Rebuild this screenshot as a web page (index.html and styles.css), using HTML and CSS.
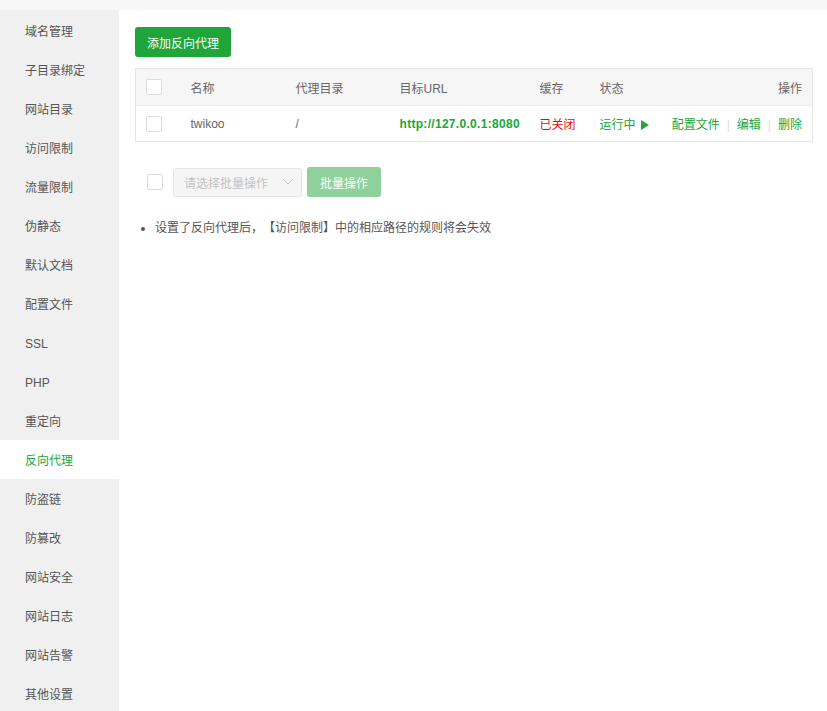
FILE: index.html
```html
<!DOCTYPE html>
<html lang="zh-CN">
<head>
    <meta charset="UTF-8">
    <meta name="viewport" content="width=device-width, initial-scale=1.0">
    <title>反向代理</title>
    <link rel="stylesheet" href="styles.css">
</head>
<body>
    <div class="top-strip"></div>
    <div class="layout">
        <ul class="side-menu">
            <li>域名管理</li>
            <li>子目录绑定</li>
            <li>网站目录</li>
            <li>访问限制</li>
            <li>流量限制</li>
            <li>伪静态</li>
            <li>默认文档</li>
            <li>配置文件</li>
            <li>SSL</li>
            <li>PHP</li>
            <li>重定向</li>
            <li class="active">反向代理</li>
            <li>防盗链</li>
            <li>防篡改</li>
            <li>网站安全</li>
            <li>网站日志</li>
            <li>网站告警</li>
            <li>其他设置</li>
        </ul>
        <main class="content">
            <button class="btn-green">添加反向代理</button>
            <table class="proxy-table">
                <colgroup>
                    <col style="width: 45px">
                    <col style="width: 105px">
                    <col style="width: 104px">
                    <col style="width: 140px">
                    <col style="width: 60px">
                    <col style="width: 70px">
                    <col>
                </colgroup>
                <thead>
                    <tr>
                        <th><span class="checkbox"></span></th>
                        <th>名称</th>
                        <th>代理目录</th>
                        <th>目标URL</th>
                        <th>缓存</th>
                        <th>状态</th>
                        <th class="right">操作</th>
                    </tr>
                </thead>
                <tbody>
                    <tr>
                        <td><span class="checkbox"></span></td>
                        <td>twikoo</td>
                        <td>/</td>
                        <td class="url">http://127.0.0.1:8080</td>
                        <td class="off">已关闭</td>
                        <td class="running">运行中<svg class="play" width="8" height="10" viewBox="0 0 8 10"><path d="M0 0 L8 5 L0 10 Z" fill="#20a53a"/></svg></td>
                        <td class="right actions">
                            <a href="#">配置文件</a><span class="sep">|</span><a href="#">编辑</a><span class="sep">|</span><a href="#">删除</a>
                        </td>
                    </tr>
                </tbody>
            </table>
            <div class="batch">
                <span class="checkbox"></span>
                <div class="select">
                    <span>请选择批量操作</span>
                    <svg width="12" height="8" viewBox="0 0 12 8"><path d="M1 1 L6 6 L11 1" fill="none" stroke="#c8c8c8" stroke-width="1"/></svg>
                </div>
                <button class="btn-green disabled">批量操作</button>
            </div>
            <ul class="tips">
                <li>设置了反向代理后，【访问限制】中的相应路径的规则将会失效</li>
            </ul>
        </main>
    </div>
</body>
</html>
```

FILE: styles.css
```css
body {
    margin: 0;
    background: #fff;
    font-family: "Liberation Sans", "Noto Sans CJK SC", sans-serif;
    font-size: 12px;
    color: #666;
}
.top-strip {
    height: 10px;
    background: #f6f6f6;
}
.layout {
    display: flex;
    min-height: 701px;
}
.side-menu {
    list-style: none;
    margin: 0;
    padding: 1px 0 0 0;
    width: 119px;
    background: #f0f0f0;
}
.side-menu li {
    height: 37px;
    line-height: 39px;
    padding: 2px 0 0 25px;
    color: #555;
}
.side-menu li.active {
    background: #fff;
    color: #20a53a;
}
.content {
    flex: 1;
    padding: 17px 14px 0 16px;
}
.btn-green {
    display: block;
    height: 30px;
    padding: 0 12px;
    border: 0;
    border-radius: 3px;
    background: #20a53a;
    color: #fff;
    font-family: inherit;
    font-size: 12px;
    cursor: pointer;
}
.btn-green.disabled {
    opacity: 0.5;
    padding: 0 13px;
}
.proxy-table {
    margin-top: 11px;
    width: 100%;
    table-layout: fixed;
    border-collapse: collapse;
    border: 1px solid #e6e6e6;
}
.proxy-table th {
    height: 36px;
    background: #f6f6f6;
    font-weight: normal;
    text-align: left;
    padding: 0 10px;
    color: #666;
}
.proxy-table td {
    height: 35px;
    padding: 0 10px;
    border-top: 1px solid #eee;
    white-space: nowrap;
}
.proxy-table .right {
    text-align: right;
}
.checkbox {
    display: inline-block;
    width: 14px;
    height: 14px;
    border: 1px solid #ddd;
    border-radius: 2px;
    background: #fff;
    vertical-align: middle;
}
.url {
    color: #20a53a;
    font-weight: bold;
    letter-spacing: 0.3px;
}
.off {
    color: #ef0808;
}
.running {
    color: #20a53a;
}
.play {
    margin-left: 5px;
    vertical-align: -1px;
}
.actions a {
    color: #20a53a;
    text-decoration: none;
}
.sep {
    color: #ddd;
    margin: 0 7px;
}
.batch {
    display: flex;
    align-items: center;
    margin-top: 25px;
    padding-left: 12px;
}
.select {
    display: flex;
    align-items: center;
    justify-content: space-between;
    box-sizing: border-box;
    width: 129px;
    height: 29px;
    margin-left: 10px;
    padding: 0 7px 0 10px;
    border: 1px solid #e6e6e6;
    border-radius: 3px;
    background: #f5f5f5;
    color: #c2c2c2;
}
.batch .btn-green {
    margin-left: 5px;
}
.tips {
    margin: 21px 0 0 0;
    padding-left: 20px;
    line-height: 20px;
    color: #555;
    text-spacing-trim: space-all;
}
```
